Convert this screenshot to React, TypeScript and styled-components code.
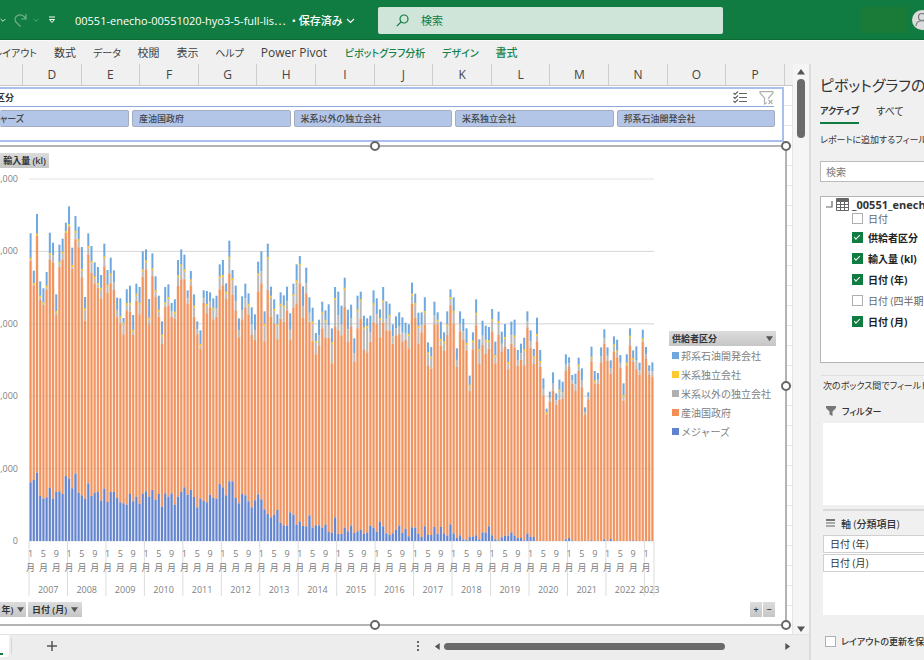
import React from "react";
import styled, { createGlobalStyle } from "styled-components";

const GlobalStyle = createGlobalStyle`
  *, *::before, *::after { box-sizing: border-box; }
  html, body, #root { height: 100%; }
  body {
    margin: 0;
    overflow: hidden;
    background: #f0f0f0;
    color: #333;
    font-family: "Open Sans", "Noto Sans CJK JP", sans-serif;
    font-size: 11px;
    font-feature-settings: "palt";
  }
  button, input { font: inherit; font-feature-settings: inherit; color: inherit; margin: 0; }
  button { border: 0; padding: 0; background: none; white-space: nowrap; }
  h2, h3, p, ul { margin: 0; padding: 0; font-weight: 400; list-style: none; }
`;

const green = "#107c41";

/* ---------- data ---------- */

// Each row: distance of the bar top, of the state-owned top and of the majors top
// from the upper edge, then the position of the thin independent band (0 = none).
type Block = { base: number; rows: string };

const blocks: Block[] = [
  {
    base: 1203,
    rows: `280,362,1027,356 392,436,1020,432 222,288,998,284 424,480,1068,470 445,495,1076,490 396,450,1072,440
278,358,1044,342 308,368,1076,0 463,525,1056,516 314,380,1054,368 296,358,1062,338 248,278,1008,276
199,260,1016,255 323,387,1045,378 228,298,1001,275 260,322,1058,300 321,412,1066,390 471,542,1076,508
280,343,1030,321 318,398,1068,366 367,430,1058,412 381,443,1056,432 405,475,1082,446 311,379,1046,352
390,458,1086,436 353,430,1056,403 391,450,1056,0 473,532,1074,0 475,550,1087,532 534,583,1090,550
448,511,1094,492 437,515,1062,492 525,585,1084,573 431,482,1070,464 441,523,1091,491 334,410,1062,391
328,388,1054,364 477,553,1070,536 340,407,1050,388 409,470,1080,453 467,530,1062,512 544,612,1100,587
441,501,1060,490 433,496,1070,474 489,530,1060,0 478,536,1094,518 360,438,1070,409 328,418,1056,376
344,418,1042,391 451,490,1064,0 393,436,1050,421 463,530,1071,500 544,583,1102,0 571,626,1076,615
451,489,1082,0 453,520,1087,495 457,502,1064,0 475,538,1074,506 467,530,1076,0 373,448,1032,411`,
  },
  {
    base: 933,
    rows: `90,166,772,138 160,207,796,188 32,131,754,83 120,195,754,148 167,241,804,0 265,322,820,0
199,268,792,0 161,232,796,0 190,254,814,224 232,315,832,0 253,329,811,0 95,184,793,133
64,160,808,0 244,334,838,284 41,180,852,84 170,260,862,200 208,282,854,240 253,328,840,284
187,266,878,224 196,275,886,230 170,241,887,0 250,330,847,0 161,233,854,195 103,220,884,154
78,160,874,104 169,264,888,0 113,190,889,0 202,277,856,0 233,334,893,277 309,373,886,336
269,346,886,0 215,295,893,248 241,323,884,272 223,323,906,0 295,400,909,340 171,291,862,207
185,301,912,0 227,316,912,0 143,231,893,176 239,334,904,0 224,289,887,0 325,396,909,0
197,295,904,241 185,266,899,211 257,358,911,295 265,367,908,291 257,336,887,0 181,277,893,222
205,282,905,0 238,322,875,268 171,278,889,214 214,301,910,0 221,302,915,257 283,341,910,0
259,316,900,0 247,313,887,0 262,336,909,0 278,330,897,0 283,355,919,315 158,221,892,194
191,264,893,222 248,341,912,291 247,307,921,0 202,283,889,246 337,406,915,370 351,416,915,382
215,283,891,0 247,283,912,272`,
  },
  {
    base: 813,
    rows: `155,227,771,210 187,242,790,217 124,195,797,166 58,106,763,84
82,160,790,125 235,291,804,0 124,184,796,0 146,208,808,0 175,241,810,222 317,362,801,347
187,238,800,214 88,166,796,131 208,282,808,240 152,225,787,0 167,252,788,212 171,236,769,214
117,184,796,150 215,280,808,258 125,195,811,156 185,244,802,0 162,231,797,204 237,298,797,279
155,221,787,0 149,232,797,199 240,288,804,0 221,269,804,0 203,286,811,241 124,172,791,0
181,233,801,0 237,282,801,262 143,214,813,195 240,291,813,276 325,376,813,0 416,433,813,430
365,395,813,0 307,362,813,0 370,404,813,0 329,390,813,361 335,385,813,0 253,303,808,0
262,291,804,0 315,342,811,0 311,363,813,0 263,303,813,286 295,352,813,0 412,435,813,0
367,388,813,0 230,274,811,263 303,340,813,334 309,342,813,0 232,277,813,0 178,221,808,0
232,273,813,0 271,311,807,0 199,246,813,226 209,262,813,244 255,293,813,0 340,392,813,378
253,286,813,281 175,226,813,200 241,276,811,267 229,298,813,0 278,314,813,0 179,215,813,208
231,267,813,0 286,315,811,0 277,320,813,0`,
  },
];

const bars = blocks.flatMap(({ base, rows }) =>
  rows.split(/\s+/).map((row) => {
    const [top, state, majors, band] = row.split(",").map(Number);
    return {
      total: (base - top) / 3,
      state: (base - state) / 3,
      majors: (base - majors) / 3,
      band: band ? (base - band) / 3 : 0,
      mid: band ? (base - band) / 3 : (base - top - (state - top) * 0.62) / 3,
    };
  })
);

const legend = [
  { label: "邦系石油開発会社", color: "#6fa8e0" },
  { label: "米系独立会社", color: "#ffc933" },
  { label: "米系以外の独立会社", color: "#b0b0b0" },
  { label: "産油国政府", color: "#f28e56" },
  { label: "メジャーズ", color: "#5f83cf" },
];

/* ---------- icons ---------- */

const Chevron = ({ color = "#fff", size = 9 }: { color?: string; size?: number }) => (
  <svg width={size} height={size} viewBox="0 0 9 9" fill="none" stroke={color} strokeWidth="1.2">
    <path d="M1 3l3.500 3.500L8 3" />
  </svg>
);

const Triangle = ({ dir = "down", size = 7 }: { dir?: "up" | "down" | "left" | "right"; size?: number }) => {
  const d = {
    down: "M0 1.500h8L4 7z",
    up: "M0 6.500h8L4 1z",
    left: "M6.500 0v8L1 4z",
    right: "M1.500 0v8L7 4z",
  }[dir];
  return (
    <svg width={size} height={size} viewBox="0 0 8 8" fill="#555">
      <path d={d} />
    </svg>
  );
};

/* ---------- title bar ---------- */

const Window = styled.div`
  display: grid;
  grid-template-rows: 40px 24px minmax(0, 1fr);
  height: 100vh;
  overflow: hidden;
`;

const TitleBar = styled.header`
  display: flex;
  align-items: center;
  background: ${green};
  color: #fff;
  overflow: hidden;
  box-shadow: inset 0 -1px #0b6b35;
`;

const QuickTools = styled.div`
  display: flex;
  align-items: center;
  gap: 6px;
  flex: 0 0 75px;
  overflow: hidden;
  svg { display: block; flex: none; }
`;

const QuickButton = styled.button<{ $dim?: boolean; $space?: number }>`
  opacity: ${(p) => (p.$dim ? 0.4 : 1)};
  margin-left: ${(p) => p.$space ?? 0}px;
`;

const FileName = styled.button`
  display: flex;
  align-items: center;
  flex: 0 0 303px;
  gap: 4px;
  color: #fff;
  font-size: 11px;
  span { margin-left: 2px; font-weight: 500; }
`;

const TitleSearch = styled.label`
  display: flex;
  align-items: center;
  gap: 10px;
  flex: 0 1 345px;
  height: 27px;
  padding-left: 18px;
  border-radius: 2px;
  background: #cfe5da;
  color: ${green};
  svg { flex: none; }
  input {
    flex: 1;
    min-width: 0;
    border: 0;
    outline: 0;
    background: none;
    color: ${green};
    font-size: 11px;
  }
  input::placeholder { color: ${green}; opacity: 1; }
`;

const Account = styled.div`
  display: flex;
  flex: 0 0 62px;
  gap: 4px;
  align-items: center;
  margin-left: auto;
  overflow: hidden;
  span { flex: 0 0 46px; height: 26px; background: #197b37; }
  svg { flex: none; }
`;

/* ---------- ribbon ---------- */

const Ribbon = styled.nav`
  display: flex;
  align-items: center;
  gap: 16px;
  background: #f0f0f0;
  border-top: 1px solid #fafafa;
  overflow: hidden;
`;

const RibbonTab = styled.button<{ $w: number; $size: number; $accent?: boolean; $cut?: boolean }>`
  display: flex;
  justify-content: ${(p) => (p.$cut ? "flex-end" : "center")};
  flex: 0 0 ${(p) => p.$w}px;
  overflow: ${(p) => (p.$cut ? "hidden" : "visible")};
  color: ${(p) => (p.$accent ? "#15834a" : "#404040")};
  font-size: ${(p) => p.$size}px;
  font-weight: ${(p) => (p.$accent ? 500 : 400)};
  line-height: 18px;
`;

const ribbonTabs = [
  { label: "レイアウト", w: 37, size: 10, cut: true },
  { label: "数式", w: 24, size: 11 },
  { label: "データ", w: 27, size: 10 },
  { label: "校閲", w: 23, size: 11 },
  { label: "表示", w: 23, size: 11 },
  { label: "ヘルプ", w: 29, size: 10 },
  { label: "Power Pivot", w: 68, size: 12 },
  { label: "ピボットグラフ分析", w: 82, size: 10, accent: true },
  { label: "デザイン", w: 37, size: 10, accent: true },
  { label: "書式", w: 23, size: 11, accent: true },
];

/* ---------- workspace ---------- */

const Workspace = styled.div`
  display: grid;
  grid-template-columns: minmax(0, 1fr) 115px;
  min-height: 0;
`;

const Book = styled.main`
  display: grid;
  grid-template-columns: minmax(0, 1fr) 16px;
  grid-template-rows: minmax(0, 1fr) 26px;
  min-height: 0;
`;

const SheetArea = styled.section`
  display: flex;
  flex-direction: column;
  min-height: 0;
  overflow: hidden;
  background: #fff;
`;

const Columns = styled.div`
  display: flex;
  flex: 0 0 22px;
  background: #f0f0f0;
  border-bottom: 1px solid #c8c8c8;
  color: #444;
  overflow: hidden;
`;

const ColumnHead = styled.div<{ $first?: boolean }>`
  flex: ${(p) => (p.$first ? "0 0 23px" : "1 1 0")};
  border-right: 1px solid #cdcdcd;
  font-size: 12px;
  line-height: 21px;
  text-align: center;
`;

const ColumnRest = styled.div`
  flex: 0 0 8px;
`;

const Grid = styled.div`
  display: flex;
  flex-direction: column;
  flex: 1;
  min-height: 0;
  padding: 1px 5px 8px 0;
  background:
    repeating-linear-gradient(to bottom, transparent 0 19px, #e6e6e6 19px 20px);
  border-right: 1px solid #e4e4e4;
`;

const Slicer = styled.section`
  flex: 0 0 55px;
  margin-right: 3px;
  border: 2px solid #a9c0ee;
  border-left: 0;
  background: #fff;
`;

const SlicerHead = styled.div`
  display: flex;
  align-items: center;
  gap: 12px;
  height: 18px;
  margin-right: 8px;
  border-bottom: 1px solid #8ea9db;
  h3 {
    display: flex;
    justify-content: flex-end;
    width: 14px;
    margin-right: auto;
    overflow: hidden;
    font-size: 9px;
    font-weight: 700;
    white-space: nowrap;
  }
  svg { display: block; }
`;

const SlicerItems = styled.div`
  display: flex;
  gap: 3px;
  margin: 3px 7px 0 0;
`;

const SlicerItem = styled.button<{ $cut?: boolean }>`
  display: flex;
  align-items: center;
  flex: ${(p) => (p.$cut ? "0 0 129px" : "1 1 0")};
  height: 17px;
  padding-left: ${(p) => (p.$cut ? 0 : 6)}px;
  border: 1px solid #a3acc0;
  border-left-width: ${(p) => (p.$cut ? 0 : 1)}px;
  border-radius: 2px;
  background: #b4c6e7;
  color: #444;
  font-size: 9px;
  font-weight: 500;
  overflow: hidden;
`;

const ChartFrame = styled.section`
  position: relative;
  display: flex;
  flex: 1;
  flex-direction: column;
  min-height: 0;
  margin-top: 3px;
  padding-bottom: 7px;
  border: 2px solid #b3b3b3;
  border-left: 0;
  background: #fff;
`;

const Handle = styled.span<{ $x: string; $y: string }>`
  position: absolute;
  left: ${(p) => p.$x};
  top: ${(p) => p.$y};
  width: 10px;
  height: 10px;
  border: 2px solid #666;
  border-radius: 50%;
  background: #fff;
  transform: translate(-50%, -50%);
`;

const FieldBar = styled.div<{ $top: number }>`
  display: flex;
  gap: 2px;
  padding: ${(p) => p.$top}px 10px 0 0;
`;

const FieldButton = styled.button<{ $w?: number; $spread?: boolean }>`
  display: flex;
  align-items: center;
  justify-content: ${(p) => (p.$spread ? "space-between" : "center")};
  gap: 4px;
  width: ${(p) => p.$w}px;
  height: 15px;
  padding: 0 ${(p) => (p.$spread ? 3 : 0)}px;
  background: linear-gradient(#dcdcdc, #c6c6c6);
  color: #333;
  font-size: 9px;
  font-weight: 600;
  overflow: hidden;
`;

const SignPair = styled.div`
  display: flex;
  gap: 1px;
  margin-left: auto;
`;

const ChartBody = styled.div`
  display: flex;
  flex: 1;
  justify-content: space-between;
  min-height: 0;
`;

const Plot = styled.svg`
  display: block;
  flex: 0 0 664px;
  height: 430px;
  margin-top: 1px;
  text { font-family: "Open Sans", "Noto Sans CJK JP", sans-serif; font-size: 9px; fill: #808080; }
`;

const Legend = styled.div`
  flex: 0 0 107px;
  margin: 163px 9px 0 0;
`;

const LegendItem = styled.li<{ $color: string }>`
  display: flex;
  align-items: center;
  gap: 2px;
  height: 18px;
  margin-bottom: 1px;
  padding-left: 3px;
  color: #808080;
  font-size: 10px;
  font-feature-settings: normal;
  white-space: nowrap;
  &::before {
    content: "";
    flex: 0 0 7px;
    height: 7px;
    background: ${(p) => p.$color};
  }
`;

const ScrollColumn = styled.div`
  display: flex;
  flex-direction: column;
  align-items: center;
  gap: 3px;
  padding: 4px 0 1px;
  background: #f5f5f5;
  svg { display: block; }
`;

const Thumb = styled.div<{ $w: number; $h: number }>`
  flex: none;
  width: ${(p) => p.$w}px;
  height: ${(p) => p.$h}px;
  border-radius: 4px;
  background: #6a6a6a;
`;

const Spring = styled.div`
  flex: 1;
`;

const SheetBar = styled.footer`
  display: flex;
  align-items: center;
  grid-column: 1 / -1;
  padding-bottom: 3px;
  background: #ededed;
  border-top: 1px solid #e2e2e2;
`;

const SheetTab = styled.button`
  width: 9px;
  height: 100%;
  background: linear-gradient(${green}, ${green}) 0 18px / 3px 2px no-repeat #fff;
  border-radius: 0 0 4px 0;
`;

const AddSheet = styled.button`
  width: 84px;
  height: 16px;
  margin-left: 2px;
  padding-right: 4px;
  border-left: 1px solid #d5d5d5;
  svg { display: block; margin: 0 auto; }
`;

const HScroll = styled.div`
  display: flex;
  align-items: center;
  flex: 0 0 393px;
  height: 14px;
  margin-left: auto;
  gap: 3px;
  padding-right: 18px;
  svg { flex: none; }
`;

const More = styled.button`
  display: flex;
  width: 15px;
`;

/* ---------- field pane ---------- */

const Pane = styled.aside`
  display: flex;
  flex-direction: column;
  padding: 8px 0 0 9px;
  border-left: 2px solid #dcdcdc;
  background: #f0f0f0;
  overflow: hidden;
  white-space: nowrap;
`;

const PaneTitle = styled.h2`
  height: 26px;
  color: #333;
  font-size: 15px;
  line-height: 26px;
`;

const PaneTabs = styled.div`
  display: flex;
  gap: 17px;
  height: 26px;
`;

const PaneTab = styled.button<{ $on?: boolean }>`
  height: 26px;
  border-bottom: 2px solid ${(p) => (p.$on ? green : "transparent")};
  font-size: ${(p) => (p.$on ? 9 : 10)}px;
  font-weight: ${(p) => (p.$on ? 700 : 400)};
`;

const Hint = styled.p`
  flex: none;
  font-size: 9px;
  line-height: 32px;
`;

const PaneSearch = styled.input`
  flex: none;
  width: 180px;
  height: 21px;
  margin-top: 5px;
  padding: 0 5px;
  border: 1px solid #bcbcbc;
  border-radius: 0;
  background: #fff;
  font-size: 10px;
  &::placeholder { color: #777; opacity: 1; }
`;

const FieldTree = styled.div`
  flex: none;
  width: 180px;
  height: 167px;
  margin-top: 14px;
  border: 1px solid #b5b5b5;
  background: #fff;
`;

const TreeRoot = styled.div`
  display: flex;
  align-items: center;
  gap: 3px;
  height: 14px;
  padding-left: 5px;
  font-size: 11px;
  font-weight: 700;
  svg { flex: none; }
`;

const FieldRow = styled.label<{ $on?: boolean; $tight?: boolean }>`
  display: flex;
  align-items: center;
  gap: 5px;
  height: ${(p) => (p.$tight ? 14 : 21)}px;
  margin-bottom: ${(p) => (p.$tight ? 2 : 0)}px;
  padding-left: 31px;
  color: ${(p) => (p.$on ? "#222" : "#666")};
  font-size: 10px;
  font-weight: ${(p) => (p.$on ? 700 : 400)};
`;

const Tick = styled.input`
  appearance: none;
  flex: none;
  width: 11px;
  height: 11px;
  border: 1px solid #b0b0b0;
  background: #fff;
  &:checked {
    border-color: ${green};
    background: ${green};
  }
  &:checked::before {
    content: "";
    display: block;
    width: 6px;
    height: 3px;
    margin: 2px 0 0 1px;
    border: solid #fff;
    border-width: 0 0 1px 1px;
    transform: rotate(-45deg);
  }
`;

const AreaNote = styled.p`
  flex: none;
  height: 24px;
  margin: 12px 0 0 1px;
  padding-left: 2px;
  border-top: 1px solid #dedede;
  font-size: 9px;
  line-height: 20px;
`;

const AreaHead = styled.h3<{ $size: number }>`
  display: flex;
  align-items: center;
  flex: none;
  gap: 6px;
  height: 24px;
  padding-left: 6px;
  font-size: ${(p) => p.$size}px;
  font-weight: 500;
`;

const DropArea = styled.ul<{ $h: number }>`
  flex: none;
  width: 180px;
  height: ${(p) => p.$h}px;
  margin-left: 3px;
  background: #fff;
`;

const DropItem = styled.li`
  height: 18px;
  margin-bottom: 1px;
  padding-left: 6px;
  border: 1px solid #d0d0d0;
  font-size: 10px;
  line-height: 16px;
`;

const Rule = styled.div`
  flex: none;
  height: 2px;
  margin: 4px 0 0 3px;
  background: #d9d9d9;
`;

const Defer = styled.label`
  display: flex;
  align-items: center;
  gap: 5px;
  margin: 20px 0 0 5px;
  font-size: 9px;
  font-weight: 500;
`;

const fields = [
  { label: "日付", on: false },
  { label: "供給者区分", on: true },
  { label: "輸入量 (kl)", on: true },
  { label: "日付 (年)", on: true },
  { label: "日付 (四半期)", on: false },
  { label: "日付 (月)", on: true },
];

/* ---------- chart ---------- */

const left = 29;
const right = 654;
const base = 372;
const pitch = (right - left) / bars.length;
const gridStep = 72.4;

function PlotDrawing() {
  const centre = (i: number) => left + (i + 0.5) * pitch;
  const years = Array.from({ length: 17 }, (_, i) => 2007 + i);
  return (
    <Plot viewBox="0 0 664 430" role="img" aria-label="輸入量 (kl)">
      {[0, 1, 2, 3, 4, 5].map((n) => (
        <g key={n}>
          <line x1={left} x2={right} y1={base - n * gridStep} y2={base - n * gridStep} stroke="#e2e2e2" />
          <text x="18" y={base + 3 - n * gridStep} textAnchor="end">
            {n === 0 ? "0" : ",000"}
          </text>
        </g>
      ))}
      {bars.map((b, i) => {
        const x = centre(i) - 1;
        const part = (from: number, to: number, fill: string) => (
          <rect x={x} width="2" y={base - to} height={Math.max(0, to - from)} fill={fill} />
        );
        return (
          <g key={i}>
            <rect x={centre(i) - pitch / 2} width={pitch} y={base - b.state} height={b.state - b.majors} fill="#fae0d0" />
            <rect x={centre(i) - pitch / 2} width={pitch} y={base - b.majors} height={b.majors} fill="#d3def4" />
            {part(b.mid, b.total, "#6fa8e0")}
            {part(b.state, b.mid, "#b9b9b9")}
            {part(b.majors, b.state, "#f1945f")}
            {part(0, b.majors, "#6485cd")}
            {b.band > 0 && part(b.band - 1, b.band + 1, "#ffc933")}
          </g>
        );
      })}
      {[1, 2, 3, 4].map((n) => (
        <line key={n} x1={left} x2={right} y1={base - n * gridStep} y2={base - n * gridStep} stroke="#888" opacity="0.1" />
      ))}
      {years.map((year, k) => {
        const x0 = left + k * 12 * pitch;
        const count = year === 2023 ? 3 : 12;
        return (
          <g key={year}>
            <line x1={x0} x2={x0} y1={base} y2={base + 55} stroke="#dcdcdc" />
            <text x={x0 + (count * pitch) / 2} y={base + 52} textAnchor="middle">
              {year}
            </text>
            {[1, 5, 9]
              .filter((m) => m <= count)
              .map((m) => (
                <g key={m} textAnchor="middle">
                  <text x={centre(k * 12 + m - 1)} y={base + 16}>
                    {m}
                  </text>
                  <text x={centre(k * 12 + m - 1)} y={base + 30}>
                    月
                  </text>
                </g>
              ))}
          </g>
        );
      })}
      <line x1={right} x2={right} y1={base} y2={base + 55} stroke="#dcdcdc" />
    </Plot>
  );
}

/* ---------- page ---------- */

export default function App() {
  return (
    <Window>
      <GlobalStyle />
      <TitleBar>
        <QuickTools>
          <QuickButton aria-label="元に戻すの一覧">
            <Chevron size={6} />
          </QuickButton>
          <QuickButton $dim $space={2} aria-label="やり直し">
            <svg width="13" height="14" viewBox="0 0 13 14" fill="none" stroke="#fff" strokeWidth="1.2">
              <path d="M12 1v5H7M11.500 5.500C10 2.500 6.500 1 3.500 2.500 0 4.500.5 8 3 10l3.500 3.500" />
            </svg>
          </QuickButton>
          <QuickButton $dim aria-label="やり直しの一覧">
            <Chevron size={6} />
          </QuickButton>
          <QuickButton $space={3} aria-label="ツール バーのカスタマイズ">
            <svg width="8" height="8" viewBox="0 0 8 8" fill="none" stroke="#fff">
              <path d="M1 1h6M1.500 3.500h5L4 6.500z" />
            </svg>
          </QuickButton>
        </QuickTools>
        <FileName>
          00551-enecho-00551020-hyo3-5-full-lis⋯ <span>• 保存済み</span>
          <Chevron />
        </FileName>
        <TitleSearch>
          <svg width="13" height="13" viewBox="0 0 13 13" fill="none" stroke={green} strokeWidth="1.200">
            <circle cx="8" cy="5" r="4" />
            <path d="M5 8L.8 12.200" />
          </svg>
          <input type="search" placeholder="検索" aria-label="検索" />
        </TitleSearch>
        <Account>
          <span />
          <svg width="20" height="20" viewBox="0 0 20 20" fill="#dcdcdc" stroke="#777" strokeWidth="1.200">
            <circle cx="10" cy="10" r="10" stroke="none" />
            <circle cx="10" cy="7" r="3.500" />
            <path d="M4 16c0-7 12-7 12 0" />
          </svg>
        </Account>
      </TitleBar>

      <Ribbon>
        {ribbonTabs.map((t) => (
          <RibbonTab key={t.label} $w={t.w} $size={t.size} $accent={t.accent} $cut={t.cut}>
            {t.label}
          </RibbonTab>
        ))}
      </Ribbon>

      <Workspace>
        <Book>
          <SheetArea>
            <Columns>
              <ColumnHead $first />
              {"DEFGHIJKLMNOP".split("").map((c) => (
                <ColumnHead key={c}>{c}</ColumnHead>
              ))}
              <ColumnRest />
            </Columns>
            <Grid>
              <Slicer>
                <SlicerHead>
                  <h3>供給者区分</h3>
                  <svg width="14" height="13" viewBox="0 0 14 13" fill="none" stroke="#666" strokeWidth="1.200">
                    <path d="M6 2.500h8M6 6.500h8M6 10.500h8M.5 2l1.500 1.500L5 .5M.5 6l1.500 1.500L5 4.500M.5 10l1.500 1.500L5 8.500" />
                  </svg>
                  <svg width="15" height="14" viewBox="0 0 15 14" fill="none" stroke="#b0b0b0" strokeWidth="1.200">
                    <path d="M9.500 8V7L14 2V.7H1V2l4.500 5v6L8 11.500M9.500 9l4 4M13.500 9l-4 4" />
                  </svg>
                </SlicerHead>
                <SlicerItems>
                  <SlicerItem $cut>ャーズ</SlicerItem>
                  <SlicerItem>産油国政府</SlicerItem>
                  <SlicerItem>米系以外の独立会社</SlicerItem>
                  <SlicerItem>米系独立会社</SlicerItem>
                  <SlicerItem>邦系石油開発会社</SlicerItem>
                </SlicerItems>
              </Slicer>

              <ChartFrame>
                <FieldBar $top={6}>
                  <FieldButton $w={49}>輸入量 (kl)</FieldButton>
                </FieldBar>
                <ChartBody>
                  <PlotDrawing />
                  <Legend>
                    <FieldButton $w={107} $spread>
                      供給者区分
                      <Triangle />
                    </FieldButton>
                    <ul>
                      {legend.map((l) => (
                        <LegendItem key={l.label} $color={l.color}>
                          {l.label}
                        </LegendItem>
                      ))}
                    </ul>
                  </Legend>
                </ChartBody>
                <FieldBar $top={0}>
                  <FieldButton $w={26}>
                    年)
                    <Triangle />
                  </FieldButton>
                  <FieldButton $w={54}>
                    日付 (月)
                    <Triangle />
                  </FieldButton>
                  <SignPair>
                    <FieldButton $w={12}>+</FieldButton>
                    <FieldButton $w={12}>−</FieldButton>
                  </SignPair>
                </FieldBar>
                <Handle $x="375px" $y="-1px" />
                <Handle $x="375px" $y="calc(100% + 1px)" />
                <Handle $x="calc(100% + 1px)" $y="-1px" />
                <Handle $x="calc(100% + 1px)" $y="50%" />
                <Handle $x="calc(100% + 1px)" $y="calc(100% + 1px)" />
              </ChartFrame>
            </Grid>
          </SheetArea>

          <ScrollColumn>
            <Triangle dir="up" size={8} />
            <Thumb $w={8} $h={59} />
            <Spring />
            <Triangle size={8} />
          </ScrollColumn>

          <SheetBar>
            <SheetTab aria-label="シート" />
            <AddSheet aria-label="新しいシート">
              <svg width="10" height="10" viewBox="0 0 10 10" stroke="#555" strokeWidth="1.500">
                <path d="M5 0v10M0 5h10" />
              </svg>
            </AddSheet>
            <HScroll>
              <More aria-label="その他">
                <svg width="4" height="10" viewBox="0 0 4 10" fill="#666">
                  <path d="M1 0h2v2H1zM1 4h2v2H1zM1 8h2v2H1z" />
                </svg>
              </More>
              <Triangle dir="left" />
              <Thumb $w={281} $h={7} />
              <Spring />
              <Triangle dir="right" />
            </HScroll>
          </SheetBar>
        </Book>

        <Pane>
          <PaneTitle>ピボットグラフの</PaneTitle>
          <PaneTabs>
            <PaneTab $on>アクティブ</PaneTab>
            <PaneTab>すべて</PaneTab>
          </PaneTabs>
          <Hint>レポートに追加するフィールド</Hint>
          <PaneSearch type="search" placeholder="検索" aria-label="フィールドの検索" />
          <FieldTree>
            <TreeRoot>
              <svg width="7" height="7" viewBox="0 0 7 7" fill="none" stroke="#666" strokeWidth="1.200">
                <path d="M6 0v6H0" />
              </svg>
              <svg width="13" height="13" viewBox="0 0 13 13" fill="none" stroke="#666">
                <path d="M.5.5h12v12H.5zM.5 3.500h12M.5 6.500h12M.5 9.500h12M4.500 3v9.500M8.500 3v9.500" />
                <path d="M0 2h13" strokeWidth="2" />
              </svg>
              _00551_enecho
            </TreeRoot>
            {fields.map((f, i) => (
              <FieldRow key={f.label} $on={f.on} $tight={i === 0}>
                <Tick type="checkbox" defaultChecked={f.on} />
                {f.label}
              </FieldRow>
            ))}
          </FieldTree>
          <AreaNote>次のボックス間でフィールドを</AreaNote>
          <AreaHead $size={9}>
            <svg width="10" height="10" viewBox="0 0 10 10" fill="#777">
              <path d="M0 0h10v2L6.500 5.500V10l-3-1.500v-3L0 2z" />
            </svg>
            フィルター
          </AreaHead>
          <DropArea $h={82} />
          <Rule />
          <AreaHead $size={10}>
            <svg width="9" height="8" viewBox="0 0 9 8" fill="#aaa">
              <path d="M0 0h9v2H0z" fill="#777" />
              <path d="M0 3h9v2H0zM0 6h9v2H0z" />
            </svg>
            軸 (分類項目)
          </AreaHead>
          <DropArea $h={80}>
            <DropItem>日付 (年)</DropItem>
            <DropItem>日付 (月)</DropItem>
          </DropArea>
          <Defer>
            <Tick type="checkbox" />
            レイアウトの更新を保留
          </Defer>
        </Pane>
      </Workspace>
    </Window>
  );
}
